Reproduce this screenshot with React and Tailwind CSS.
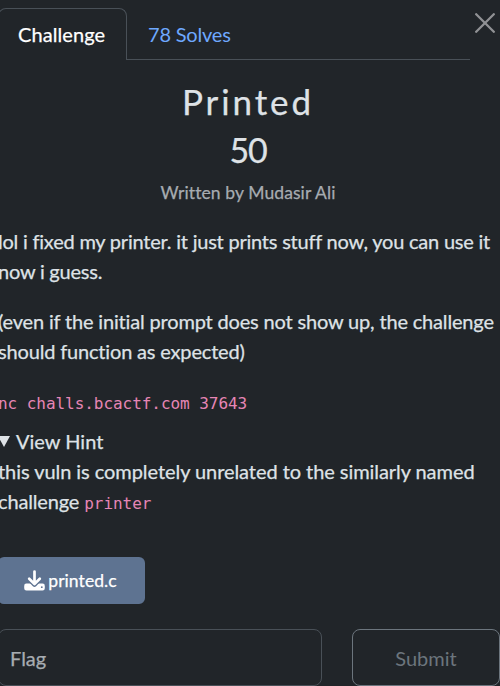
function Tabs() {
  return (
    <div className="flex h-[60px] w-full items-end">
      <div className="flex h-[60px] w-[472px] items-end">
        <div className="flex h-[52px] w-[129px] shrink-0 items-center rounded-t-[8px] border border-b-0 border-[#495057] pb-px pl-[19px] tracking-[0.08px] text-white">
          Challenge
        </div>
        <div className="flex h-[52px] flex-1 items-center border-b border-[#495057] pl-[21px] tracking-[-0.2px] text-[#6ea8fe] [-webkit-text-stroke:0px]">
          78 Solves
        </div>
      </div>
      <button aria-label="Close" className="mb-[27px] ml-[5px] h-5 w-5 shrink-0">
        <svg viewBox="0 0 20 20" className="h-5 w-5" fill="none" stroke="#909194" strokeWidth="2.3" strokeLinecap="round">
          <path d="M1.2 1.2 18.8 18.8M18.8 1.2 1.2 18.8" />
        </svg>
      </button>
    </div>
  );
}

function Code({ children }) {
  return <code className="font-['DejaVu_Sans_Mono',monospace] text-[16px] leading-none tracking-[-0.05px] text-[#e685b5] [-webkit-text-stroke:0px]">{children}</code>;
}

export default function App() {
  return (
    <div className="h-[686px] w-[500px] overflow-hidden bg-[#212529] font-['Lato',sans-serif] text-[20px] leading-[30px] text-[#dee2e6] [-webkit-text-stroke:0.25px]">
      <main className="-ml-[2px] w-[502px]">
        <Tabs />
        <header className="w-[500px] text-center">
          <h2 className="pt-5 text-[35px] leading-[42px] tracking-[2.9px]">Printed</h2>
          <h2 className="mt-[7px] text-[34px] leading-[42px] tracking-[-1.3px]">50</h2>
          <p className="mt-[7px] text-[17.5px] leading-[30px] tracking-[0.1px] text-[#a7acb1]">Written by Mudasir Ali</p>
        </header>
        <div className="mt-[18px] whitespace-nowrap">
          <p className="tracking-[-0.22px]">lol i fixed my printer. it just prints stuff now, you can use it<br />now i guess.</p>
          <p className="mt-5 tracking-[-0.17px]">(even if the initial prompt does not show up, the challenge<br />should function as expected)</p>
          <p className="mt-5"><Code>nc challs.bcactf.com 37643</Code></p>
          <div className="mt-[10px] flex items-center">
            <svg viewBox="0 0 12 11" className="mr-[6px] h-[11px] w-3" fill="#dee2e6"><path d="M0 0H12L6 11Z" /></svg>
            View Hint
          </div>
          <p className="tracking-[-0.06px]">this vuln is completely unrelated to the similarly named<br /><span className="tracking-[-0.15px]">challenge </span><Code>printer</Code></p>
        </div>
        <button className="mt-[41px] flex h-[47px] w-[147px] items-center justify-center rounded-[6px] bg-[#5e7391] pr-[2px] text-[17.5px] text-white">
          <svg viewBox="0 0 21 21" className="mr-[3px] h-[21px] w-[21px]">
            <path d="M2.6 13.5H18.4A2.3 2.3 0 0 1 20.8 15.9V18.2A2.3 2.3 0 0 1 18.4 20.5H2.6A2.3 2.3 0 0 1 .2 18.2V15.9A2.3 2.3 0 0 1 2.6 13.5Z" fill="white" />
            <path d="M10.5 1.3V14M5 9 10.5 14.6 16 9" fill="none" stroke="#5e7391" strokeWidth="4.5" strokeLinejoin="round" />
            <path d="M10.5 1.5V13.5M5.2 8.8 10.5 14 15.8 8.8" fill="none" stroke="white" strokeWidth="2.7" strokeLinecap="round" strokeLinejoin="round" />
            <circle cx="17.8" cy="17.2" r=".9" fill="#5e7391" />
          </svg>
          <span className="pt-px tracking-[0.08px]">printed.c</span>
        </button>
        <div className="mt-[25px] flex gap-[30px]">
          <div className="flex h-[57px] w-[324px] items-center rounded-[8px] border border-[#495057] pl-[11px] text-[#a7acb1]">Flag</div>
          <button className="h-[57px] w-[148px] rounded-[8px] border border-[#6c757d] text-[#6c757d] [-webkit-text-stroke:0px]">Submit</button>
        </div>
      </main>
    </div>
  );
}
